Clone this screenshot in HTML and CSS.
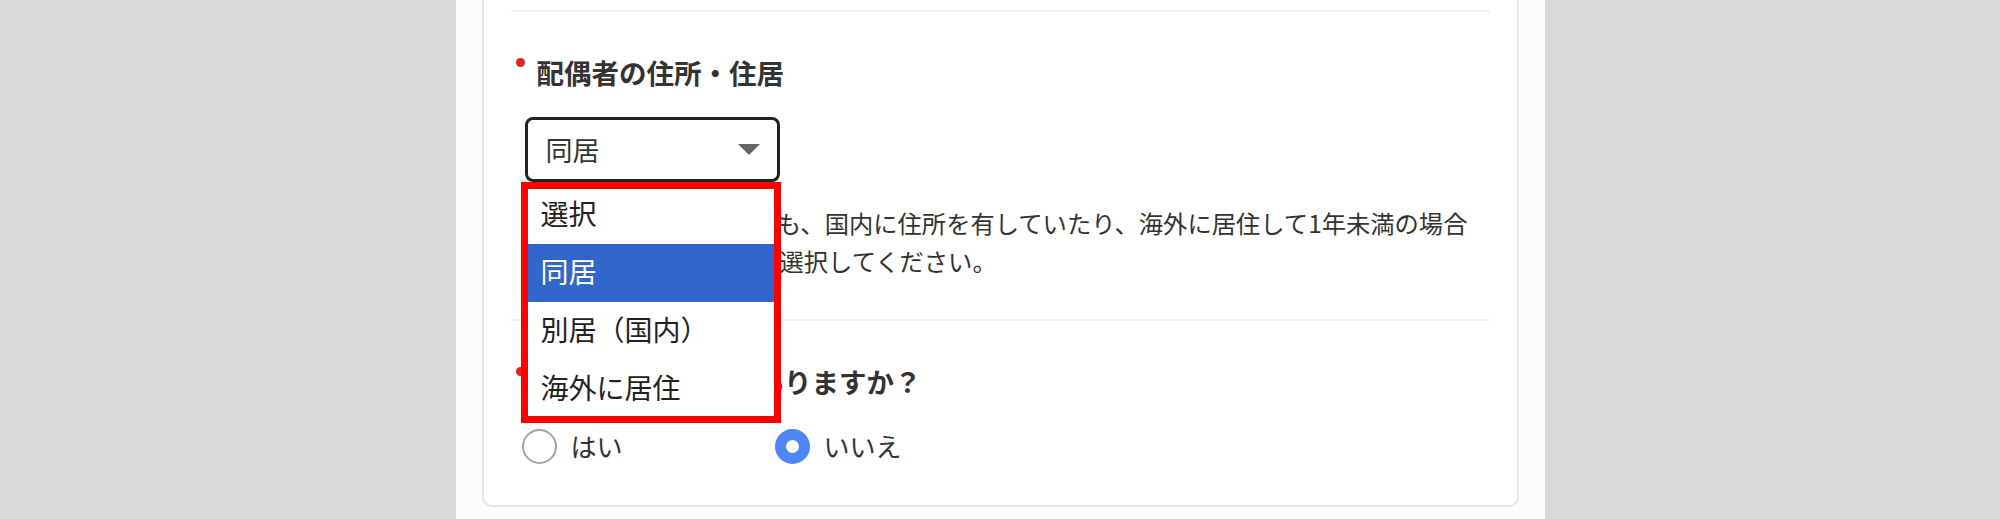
FILE: index.html
```html
<!DOCTYPE html>
<html lang="ja">
<head>
    <meta charset="UTF-8">
    <meta name="viewport" content="width=device-width, initial-scale=1.0">
    <title>配偶者の情報</title>
    <link rel="stylesheet" href="styles.css">
</head>
<body>
<div class="page">
    <div class="card">
        <div class="divider"></div>

        <div class="section">
            <h2 class="required">配偶者の住所・住居</h2>

            <div class="select-wrap">
                <div class="select">
                    <span>同居</span>
                    <span class="arrow"></span>
                </div>
                <!-- 開いているプルダウン -->
                <div class="dropdown">
                    <ul>
                        <li>選択</li>
                        <li class="selected">同居</li>
                        <li>別居（国内）</li>
                        <li>海外に居住</li>
                    </ul>
                </div>
            </div>

            <p class="note">配偶者が別居していても、国内に住所を有していたり、海外に居住して1年未満の場合<br>は「別居（国内）」を選択してください。</p>
        </div>

        <div class="divider"></div>

        <div class="section last">
            <h2 class="required">配偶者の所得等はありますか？</h2>

            <div class="radios">
                <label class="radio"><span class="circle"></span>はい</label>
                <label class="radio"><span class="circle checked"></span>いいえ</label>
            </div>
        </div>
    </div>
</div>
</body>
</html>
```

FILE: styles.css
```css
body {
    margin: 0;
    padding: 0;
    background: #d9d9d9;
    font-family: "Noto Sans CJK JP", "Noto Sans", sans-serif;
    color: #333;
}

.page {
    width: 1089px;
    height: 519px;
    margin: 0 auto;
    padding: 0 26px;
    box-sizing: border-box;
    background: #fcfcfc;
}

.card {
    background: #fff;
    border: 2px solid #e6e6e6;
    border-top: none;
    border-radius: 0 0 10px 10px;
    padding: 10px 27px 0 27px;
}

.divider {
    height: 2px;
    background: #f1f1f1;
}

.section {
    padding: 41px 0 39px 0;
}

.section.last {
    padding-bottom: 40px;
}

h2 {
    display: flex;
    align-items: flex-start;
    margin: 0;
    font-size: 27.5px;
    line-height: 38px;
    font-weight: bold;
    color: #333;
}

h2.required::before {
    content: "";
    width: 9px;
    height: 9px;
    margin: 5px 12px 0 5px;
    border-radius: 50%;
    background: #e5231b;
    flex-shrink: 0;
}

.select-wrap {
    position: relative;
    width: 255px;
    margin: 26px 0 0 14px;
}

.select {
    display: flex;
    align-items: center;
    justify-content: space-between;
    height: 65px;
    padding: 0 17px 0 18px;
    box-sizing: border-box;
    border: 3px solid #222;
    border-radius: 8px;
    font-size: 27px;
    color: #333;
}

.arrow {
    width: 0;
    height: 0;
    border-left: 11px solid transparent;
    border-right: 11px solid transparent;
    border-top: 11px solid #666;
}

.dropdown {
    position: absolute;
    left: -4px;
    top: 65px;
    width: 246px;
    height: 227px;
    border: 7px solid #ff0000;
    background: #fff;
    overflow: hidden;
    z-index: 2;
}

.dropdown ul {
    list-style: none;
    margin: -3px 0 0 0;
    padding: 0;
}

.dropdown li {
    height: 58px;
    line-height: 54px;
    padding-left: 13px;
    font-size: 28px;
    color: #222;
}

.dropdown li.selected {
    background: #3366cc;
    color: #fff;
}

.note {
    margin: 22px 0 0 0;
    padding-left: 26px;
    font-size: 24.3px;
    line-height: 38px;
    color: #333;
    text-spacing-trim: space-all;
}

.radios {
    display: flex;
    margin: 27px 0 0 11px;
}

.radio {
    display: flex;
    align-items: center;
    gap: 14px;
    width: 253px;
    font-size: 26px;
    line-height: 38px;
    color: #333;
}

.circle {
    width: 35px;
    height: 35px;
    box-sizing: border-box;
    border: 2px solid #a3a3a3;
    border-radius: 50%;
    background: #fff;
}

.circle.checked {
    border: 11.5px solid #4f86f7;
    background: #fff;
}
```
